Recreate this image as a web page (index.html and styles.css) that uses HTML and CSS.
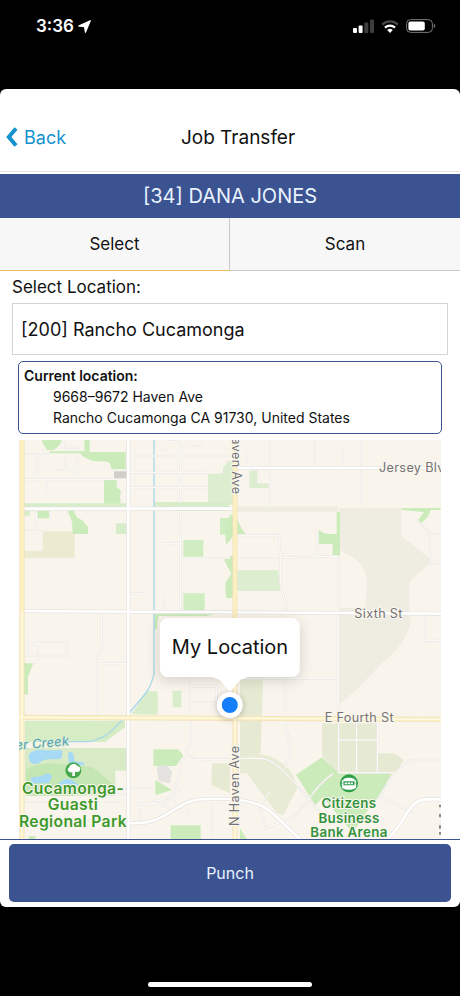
FILE: index.html
```html
<!DOCTYPE html>
<html lang="en">
  <head>
    <meta charset="UTF-8">
    <meta name="viewport" content="width=device-width, initial-scale=1.0">
    <title>Job Transfer</title>
    <link rel="stylesheet" href="styles.css">
  </head>
  <body>
    <div class="status-bar">
      <div class="status-time">
        <span>3:36</span>
        <svg width="13" height="13" viewBox="0 0 13 13"><path d="M12.3.7 7.4 12.3 6.6 6.7.6 6Z" fill="#fff" stroke="#fff" stroke-width="1.2" stroke-linejoin="round"/></svg>
      </div>
      <div class="status-icons">
        <svg width="21" height="14" viewBox="0 0 21 14">
          <rect x="0" y="9" width="4" height="5" rx="1" fill="#fff"/>
          <rect x="5.6" y="6.5" width="4" height="7.5" rx="1" fill="#fff"/>
          <rect x="11.3" y="3.5" width="4" height="10.5" rx="1" fill="#3d3d3d"/>
          <rect x="17" y="0.5" width="4" height="13.5" rx="1" fill="#3d3d3d"/>
        </svg>
        <svg width="18" height="13" viewBox="0 0 18 13" fill="none">
          <path d="M1.2 4.6a11.2 11.2 0 0 1 15.6 0" stroke="#484848" stroke-width="2.3"/>
          <path d="M4 7.6a7.3 7.3 0 0 1 10 0" stroke="#fff" stroke-width="2.3"/>
          <path d="M9 13 6.2 10.1a4.1 4.1 0 0 1 5.6 0Z" fill="#fff"/>
        </svg>
        <svg width="30" height="14" viewBox="0 0 30 14">
          <rect x=".6" y=".6" width="25.8" height="12.8" rx="4" fill="none" stroke="#777" stroke-width="1"/>
          <rect x="2.4" y="2.4" width="16.4" height="9.2" rx="2" fill="#fff"/>
          <path d="M27.8 4.8a2.4 2.4 0 0 1 0 4.4Z" fill="#777"/>
        </svg>
      </div>
    </div>

    <main class="panel">
      <header class="nav">
        <a href="#" class="back">
          <svg width="12" height="20" viewBox="0 0 12 20"><path d="M10 1.5 2.8 10l7.2 8.500" fill="none" stroke="#1492cf" stroke-width="4"/></svg>
          <span>Back</span>
        </a>
        <h1>Job Transfer</h1>
      </header>
      <div class="employee">[34] DANA JONES</div>
      <div class="tabs">
        <button class="tab active">Select</button>
        <button class="tab">Scan</button>
      </div>

      <div class="field">
        <label for="location">Select Location:</label>
        <select id="location">
          <option>[200] Rancho Cucamonga</option>
        </select>
      </div>

      <div class="current">
        <strong>Current location:</strong>
        <p>9668–9672 Haven Ave</p>
        <p>Rancho Cucamonga CA 91730, United States</p>
      </div>

      <div class="map">
        <svg class="map-base" viewBox="57 0 1266 1197" preserveAspectRatio="xMidYMid slice">
          <rect x="57" width="1266" height="1197" fill="#f9f5ed"/>

          <!-- undeveloped land -->
          <g fill="#efece1">
            <path d="M1018 204h186v84l94 74-70 62v80c20 60-30 124-76 160l-90 92-44 36V504h78l4-60c4-50-12-80-66-106l-16-10Z"/>
            <path d="M705 199h310v18H705Z"/>
            <path d="M128 274h96v80H72v-22h56Z" fill="#ecebd2"/>
            <path d="M720 700h70l-8 240-62 10Z" fill="#e7ead2"/>
            <path d="M966 850h166v150H1010l-44-54Z" fill="#e7ead2"/>
            <path d="M720 950c40-20 100-10 150 40l24 50-44 85-20-5-90-120h-20Z" fill="#e9ecd5"/>
            <path d="M1132 940h50l30 20-40 60-40-22ZM636 970h54v90l-56-25Z" fill="#e7ead2"/>
          </g>

          <!-- parks and golf -->
          <g fill="#cbebbb">
            <path d="M126 0h58c0 14-10 18-22 30h-22c0-10-14-16-14-30ZM253 0h16v36h108v52h-42c-4-20-10-26-30-24-30 2-38-4-60-18l-4-6h-90l-4-6h106Z"/>
            <path d="M312 120h38v24c12 2 16 12 10 24l2 26h-50ZM200 210h22c4 20 8 24 24 30l18 20v22h-46c-2-30 2-40-18-72ZM112 213h38v22h-38Z"/>
            <path d="M520 202h170v11H520ZM660 234h28v50h-28ZM550 300h60v50h-60ZM550 460h64v52h-64Z" fill="#d0edc2"/>
            <path d="m690 222 20 12 14 30 12 18h-30l-28 32-2-30ZM672 360l28-16v130h-22l-2-44 18-30Z"/>
            <path d="M712 391h122l8 62H712ZM668 100l2-20 16-18h18v132h-80v-92Z" fill="#dceecf"/>
            <path d="M956 268c14 16 26 14 54 14v-66h10v132h-22v-36h-42ZM1204 204h118v6h-30l-8 20-20 20-14-4 22-30-68-6Z"/>
            <path d="M748 92h24v38h34v14h-58Z" fill="#dceecf"/>
            <path d="M462 520h192l-34 8H478c-4 6-6 20-6 40h-10ZM72 670h28l-16 40v54H72Z"/>
            <path d="M395 822l46-68h32v70ZM518 752h26v50h-26Z" fill="#d9edcb"/>
            <path d="M72 190h308v14H72ZM462 186h226v18H462ZM348 250h32v32h-32ZM70 213h20v14H70Z" fill="#d7edca"/>
            <path d="M460 928h74l16 18-22 32h-68ZM512 1156h90v41h-90ZM466 1020l50 30-50 16ZM86 1188h20v9H86ZM720 1165l20 32h-20Z"/>
            <path d="M888 1004 966 952l50 48h158l-36 72-20 16-60 90-90-106-22 24Z"/>
            <path d="M75 842h300v20l-60 44H75Z" fill="#d5ecc5"/>
            <path d="M75 924h305v68h-34v75H75Z" fill="#d8ebc6"/>
            <path d="M78 990c30-30 120-20 200-8l60 50-120 35H78Z" fill="#c4e6b2"/>
          </g>
          <rect x="342" y="94" width="38" height="22" fill="#cfcfc8"/>
          <path d="m470 980 32-4 14 20-6 34-34-6Z" fill="#e4e3df"/>

          <!-- water -->
          <g fill="#a6d9f3">
            <path d="M86 945c8-14 30-18 50-14h50v22c-20 10-40 0-60 10-16 12-40 18-40-18ZM92 1014c14-8 28 0 40-10 16-8 20-2 24 6l-10 20h-50ZM204 942c4-10 14-6 16 0l4 22 30 4-4 8h-36l-8-10ZM176 1032c8-14 34-22 48-6l14 10-60 4Z"/>
            <path d="M462 0v704c-6 20-10 32-18 46-20 28-44 54-70 85-40 34-46 58-110 70h-70" fill="none" stroke="#a9d8ea" stroke-width="4"/>
          </g>

          <!-- small streets -->
          <g fill="none" stroke="#e8e5e1" stroke-width="6">
            <path id="streets" d="M72 42h76M72 118h308M112 46v70M166 90h66M196 56v34M232 48v68M140 120v36M190 0v24h50M390 48h296M390 98h230M390 142h232M542 0v188M542 216v296M488 12v24M506 4h30M560 14h50M550 354h140M490 310h50M390 460h42M492 468v44M110 214v58M70 274h60M150 214v30M305 520v110l-14 30v170M300 670h80M80 588v60h120v-38H84M114 594v50M810 0v196M945 0v80M1083 0v196M740 36v34M1028 34v40M715 286h122l4 58v90l18 64v20M715 354h100l200-6M952 270v80h60M1016 354v150M1016 520v330M1251 240l42 42h29M1290 286v82h32M1275 528v74h47M570 712v110M576 740h74v46h-74M572 840v70l-14 30M558 940l26 18h106M390 1044h70M518 1070l32-120M518 1070l20 40M410 1090h80l50-40M420 1150v-50l90-30M480 1090l40 20M856 716v130l16 90-18 50M690 716h326M700 955h80c50 4 80 50 110 80l70 80M1016 850v145M1070 850v145M1132 850v145M1016 900h116M1014 998h170M1000 1000c-60 40-80 100-120 130l-70 28M1320 960h-90l-50 42-56 90M1140 1070l100 50M808 1056l-30 50 20 60 50-22M636 1090v107M560 1110v30M346 1062h40M72 1090h300M140 1140h240M200 1080v70M280 1070v90"/>
          </g>
          <g fill="none" stroke="#fefdfb" stroke-width="3">
            <use href="#streets"/>
          </g>

          <!-- main roads -->
          <g fill="none" stroke="#e6e3e0" stroke-width="12">
            <path id="roads" d="M385 0v1197M57 513l1266 8M705 84h618M60 42h12M72 206h633M386 1149c60 4 90-10 130-36 50-32 70-36 110-36h70c90 10 110 30 140 60l64 60M1323 1078h-48c-40 2-56 50-86 90l-24 29"/>
          </g>
          <g fill="none" stroke="#fff" stroke-width="8">
            <use href="#roads"/>
          </g>
          <g fill="none" stroke="#f1dfb9" stroke-width="15">
            <path id="highways" d="M66 0v1197M705 0v1197M57 832l1266 6"/>
          </g>
          <g fill="none" stroke="#fdf0c0" stroke-width="11">
            <use href="#highways"/>
          </g>
          <path d="M57 832l1266 6M705 700v497M66 513v684" fill="none" stroke="#fffbea" stroke-width="4"/>

          <!-- street names -->
          <g class="street">
            <text x="1137" y="95">Jersey Blvd</text>
            <text x="1063" y="533">Sixth St</text>
            <text x="974" y="847">E Fourth St</text>
            <text transform="translate(696 -78) rotate(90)">N Haven Ave</text>
            <text transform="translate(718 1158) rotate(-90)">N Haven Ave</text>
            <text class="creek" transform="translate(-3 934) rotate(-5)">Deer Creek</text>
          </g>
          <path d="M1320 1094v8m0 20v10m0 24v10m0 10v8" stroke="#777" stroke-width="5"/>

          <!-- places -->
          <g class="place">
            <circle cx="220" cy="991" r="24" fill="#48a84d"/>
            <path d="M217 1008v-11c-14 2-18-10-9-15 0-11 20-14 24-4 13 2 11 18 0 18l-7-1v13Z" fill="#fff"/>
            <text x="219" y="1061">Cucamonga-</text>
            <text x="219" y="1111">Guasti</text>
            <text x="219" y="1161">Regional Park</text>
          </g>
          <g class="place arena">
            <circle cx="1047" cy="1030" r="27" fill="#2f9f49"/>
            <path d="M1030 1018c8-6 26-6 34 0v6h-34ZM1026 1036h42v7c-10 8-32 8-42 0Z" fill="#fff"/>
            <path d="M1028 1021v20m38-20v20M1034 1030h26" fill="none" stroke="#fff" stroke-width="5" stroke-dasharray="7 2"/>
            <text x="1047" y="1104">Citizens</text>
            <text x="1047" y="1148">Business</text>
            <text x="1047" y="1191">Bank Arena</text>
          </g>
        </svg>
        <div class="marker">
          <div class="callout">My Location</div>
          <div class="dot"></div>
        </div>
      </div>

      <footer class="actions">
        <button class="punch">Punch</button>
      </footer>
    </main>
    <div class="home-area"><div class="home-indicator"></div></div>
  </body>
</html>
```
FILE: styles.css
```css
* { box-sizing: border-box; margin: 0; padding: 0; }
:root {
  --blue: #3b5391;
  --link: #1492cf;
  --line: #c8c9cc;
}
body {
  display: flex;
  flex-direction: column;
  min-height: 100vh;
  background: #000;
  color: #111;
  font-family: Inter, Roboto, sans-serif;
  font-size: 16px;
}
button, select {
  font: inherit;
  color: inherit;
  cursor: pointer;
}
.status-bar {
  display: flex;
  align-items: flex-start;
  justify-content: space-between;
  height: 89px;
  padding: 14px 24px 0 36px;
  color: #fff;
}
.status-time,
.status-icons {
  display: flex;
  align-items: center;
  height: 24px;
}
.status-time {
  gap: 4px;
  font-size: 17px;
  font-weight: 600;
}
.status-icons {
  gap: 7px;
}
.panel {
  flex: 1;
  display: flex;
  flex-direction: column;
  background: #fff;
  border-radius: 6px;
  overflow: hidden;
}
.nav {
  display: grid;
  grid-template-columns: 1fr auto 1fr;
  align-items: center;
  height: 83px;
  padding: 14px 6px 0;
  border-bottom: 1px solid #e4e4e4;
}
.nav h1 {
  grid-column: 2;
  padding-left: 16px;
  font-size: 19px;
  font-weight: 400;
}
.back {
  display: flex;
  align-items: center;
  gap: 6px;
  color: var(--link);
  font-size: 18px;
  text-decoration: none;
}
.employee {
  margin-top: 2px;
  background: var(--blue);
  color: #e9f2ff;
  font-size: 20px;
  line-height: 44px;
  text-align: center;
}
.tabs {
  display: grid;
  grid-template-columns: 1fr 1fr;
}
.tab {
  height: 53px;
  background: #f7f7f8;
  border: none;
  border-bottom: 1px solid var(--line);
  font-size: 17px;
}
.tab.active {
  border-right: 1px solid var(--line);
  border-bottom-color: #f2bd58;
}
.field {
  display: flex;
  flex-direction: column;
  padding: 4px 12px 6px;
}
.field label {
  line-height: 24px;
  margin-bottom: 4px;
  font-size: 17px;
}
.field select {
  appearance: none;
  width: 100%;
  height: 52px;
  padding: 0 8px;
  background: #fff;
  border: 1px solid #d4d4d6;
  border-radius: 0;
  font-size: 18px;
}
.current {
  margin: 0 18px 6px;
  padding: 3px 5px 5px;
  border: 1px solid var(--blue);
  border-radius: 5px;
  font-size: 14px;
  line-height: 21px;
}
.current strong {
  font-weight: 600;
}
.current p {
  padding-left: 29px;
}
.map {
  position: relative;
  flex: 1;
  min-height: 320px;
  margin: 0 19px;
  overflow: hidden;
}
.map-base {
  position: absolute;
  width: 100%;
  height: 100%;
}
.map text {
  paint-order: stroke;
  stroke: #faf7f0;
  stroke-width: 6px;
  stroke-linejoin: round;
}
.street text {
  font-size: 38px;
  letter-spacing: 1px;
  fill: #737373;
}
.street .creek {
  font-style: italic;
  fill: #4f9cc0;
  stroke: #d8ecca;
}
.place text {
  font-size: 47px;
  font-weight: 600;
  letter-spacing: 1px;
  text-anchor: middle;
  fill: #3f9a2d;
}
.place.arena text {
  font-size: 40px;
  fill: #34923c;
}
.marker {
  position: absolute;
  top: 178px;
  left: 50%;
  display: flex;
  flex-direction: column;
  align-items: center;
  gap: 15px;
  transform: translateX(-50%);
}
.callout {
  position: relative;
  padding: 0 12px;
  background: #fff;
  border-radius: 8px;
  box-shadow: 0 3px 14px rgba(0, 0, 0, 0.15);
  font-size: 20px;
  line-height: 59px;
  white-space: nowrap;
}
.callout::after {
  content: "";
  position: absolute;
  top: 100%;
  left: 50%;
  width: 36px;
  height: 14px;
  background: #fff;
  clip-path: polygon(0 0, 100% 0, 78% 22%, 55% 92%, 50% 100%, 45% 92%, 22% 22%);
  transform: translateX(-50%);
}
.dot {
  width: 26px;
  height: 26px;
  background: #147efb;
  border: 5px solid #fff;
  border-radius: 50%;
  box-shadow: 0 1px 6px rgba(0, 0, 0, 0.25);
}
.actions {
  padding: 4px 9px 5px;
  border-top: 1px solid var(--blue);
}
.punch {
  width: 100%;
  height: 58px;
  background: var(--blue);
  border: none;
  border-radius: 5px;
  color: #e9f2ff;
}
.home-area {
  display: flex;
  align-items: flex-end;
  justify-content: center;
  height: 89px;
  padding-bottom: 9px;
}
.home-indicator {
  width: 164px;
  height: 5px;
  background: #fff;
  border-radius: 3px;
}
```
